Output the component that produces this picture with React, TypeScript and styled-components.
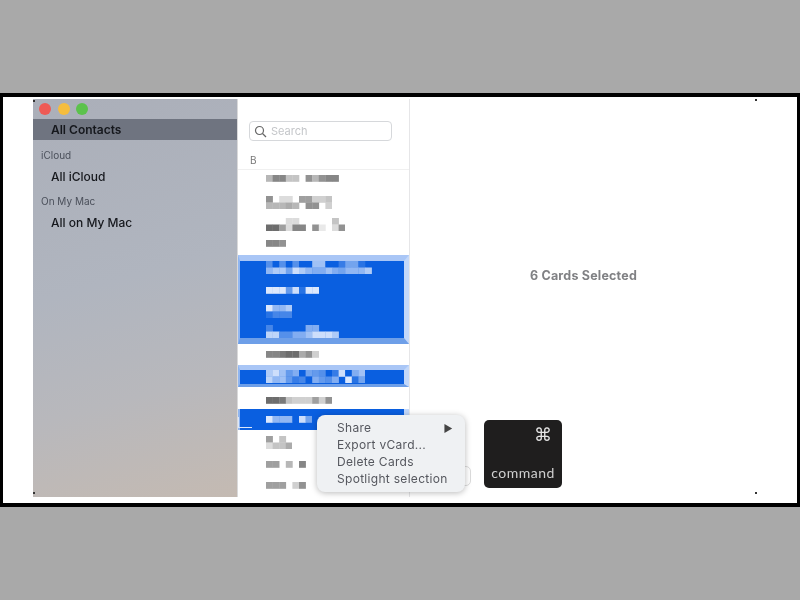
import React from 'react';
import styled, { createGlobalStyle } from 'styled-components';

const GlobalStyle = createGlobalStyle`
  html, body {
    margin: 0;
    padding: 0;
    background: #a9a9a9;
  }
  body {
    font-family: Inter, "Liberation Sans", sans-serif;
  }
`;

const Page = styled.div`
  width: 800px;
  height: 600px;
  padding-top: 93px;
  box-sizing: border-box;
  overflow: hidden;
`;

const Frame = styled.div`
  position: relative;
  height: 414px;
  box-sizing: border-box;
  border: solid #000;
  border-width: 4px 3px;
  background: #fff;
  padding: 2px 40px 6px 30px;
  filter: blur(0.4px);
`;

const Window = styled.div`
  display: flex;
  height: 398px;
`;

const Sidebar = styled.aside`
  width: 204px;
  flex: none;
  background: linear-gradient(165deg, #abafb9 0%, #b0b5bf 45%, #b8b8bc 72%, #c4bab2 100%);
  border-right: 1px solid #d9d9da;
`;

const TitleBar = styled.div`
  display: flex;
  align-items: center;
  gap: 6.5px;
  height: 20px;
  padding-left: 6px;
`;

const Light = styled.span<{ $color: string }>`
  width: 12px;
  height: 12px;
  border-radius: 50%;
  background: ${(p) => p.$color};
`;

const ActiveItem = styled.div`
  height: 21px;
  line-height: 21px;
  padding-left: 18px;
  background: #6f7480;
  color: #15171c;
  font-size: 12px;
  font-weight: 600;
`;

const GroupLabel = styled.div`
  margin: 6.5px 0 3px;
  height: 16px;
  line-height: 16px;
  padding-left: 8px;
  color: #4a4f5a;
  font-size: 10px;
`;

const SideItem = styled.div`
  height: 21px;
  line-height: 21px;
  padding-left: 18px;
  color: #15171c;
  font-size: 12px;
  font-weight: 500;
`;

const ListPane = styled.section`
  width: 171px;
  flex: none;
  overflow: hidden;
  border-right: 1px solid #e6e6e8;
  background: #fff;
`;

const SearchRow = styled.div`
  padding: 22px 17px 0 11px;
`;

const SearchBox = styled.div`
  display: flex;
  align-items: center;
  gap: 4px;
  height: 20px;
  box-sizing: border-box;
  padding-left: 4px;
  border: 1px solid #d6d8db;
  border-radius: 4px;
  color: #c4c6c9;
  font-size: 11px;
`;

const SectionHead = styled.div`
  margin-top: 13px;
  height: 15px;
  line-height: 13px;
  padding-left: 12px;
  border-bottom: 1px solid #f0f0f0;
  color: #777;
  font-size: 10px;
`;

const Row = styled.div<{ $h?: number; $top?: number }>`
  height: ${(p) => p.$h ?? 22}px;
  box-sizing: border-box;
  padding: ${(p) => p.$top ?? 6}px 0 0 28px;
`;

const SelectionBlock = styled.div<{ $h: number; $top: number; $bottom: number }>`
  height: ${(p) => p.$h}px;
  box-sizing: border-box;
  padding-left: 26px;
  background: #0a5fe0;
  border-style: solid;
  border-color: #a9c6f6 #c3d8fa #6e9fe8 #8fb5f0;
  border-width: ${(p) => p.$top}px 5px ${(p) => p.$bottom}px 2px;
  overflow: hidden;
`;

const BlockLine = styled.div<{ $h: number }>`
  height: ${(p) => p.$h}px;
`;

const Detail = styled.main`
  flex: 1;
  display: flex;
  align-items: center;
  justify-content: center;
  padding-bottom: 46px;
  color: #808184;
  font-size: 12.5px;
  font-weight: 700;
  letter-spacing: 0.2px;
`;

const ContextMenu = styled.div`
  position: absolute;
  left: 314px;
  top: 318px;
  width: 148px;
  height: 77px;
  box-sizing: border-box;
  padding: 4px 12px 0 20px;
  border-radius: 8px;
  background: #eff1f3;
  box-shadow: 0 1px 6px rgba(0, 0, 0, 0.28);
  color: #55575e;
  font-size: 12px;
  letter-spacing: 0.3px;
`;

const MenuItem = styled.div`
  display: flex;
  justify-content: space-between;
  align-items: center;
  height: 17px;
  white-space: nowrap;
`;

const MenuArrow = styled.span`
  font-size: 10px;
  color: #444;
`;

const BehindOutline = styled.div`
  position: absolute;
  left: 450px;
  top: 369px;
  width: 18px;
  height: 20px;
  box-sizing: border-box;
  border: 1px solid #dcdcdc;
  border-radius: 5px;
`;

const RowBracket = styled.span`
  position: absolute;
  left: 235px;
  top: 320px;
  width: 14px;
  height: 11px;
  box-sizing: border-box;
  border-left: 1px solid #dbe7fb;
  border-bottom: 1px solid #dbe7fb;
`;

const CommandKey = styled.div`
  position: absolute;
  left: 481px;
  top: 323px;
  width: 78px;
  height: 68px;
  box-sizing: border-box;
  display: flex;
  flex-direction: column;
  justify-content: space-between;
  padding: 4px 0 7px;
  border-radius: 5px;
  background: #1f1e1e;
  color: #cfcfcf;
`;

const CommandGlyph = styled.span`
  align-self: flex-end;
  margin-right: 10px;
  font-family: "DejaVu Sans", sans-serif;
  font-size: 18px;
  line-height: 22px;
  color: #e6e6e6;
`;

const CommandLabel = styled.span`
  text-align: center;
  font-family: Lato, sans-serif;
  font-size: 14px;
  letter-spacing: 0.5px;
`;

const CornerTick = styled.span<{ $x: number; $y: number }>`
  position: absolute;
  left: ${(p) => p.$x}px;
  top: ${(p) => p.$y}px;
  width: 2px;
  height: 2px;
  background: #333;
`;

const CELL_W = 6.6;
const CELL_H = 6.5;

// one hex digit per pixel block, 0 = darkest and f = palest, "." is left out
const shade = (c: string, tone: 'gray' | 'blue') => {
  const t = parseInt(c, 16) / 15;
  const mix = (from: number, to: number) => Math.round(from + (to - from) * t);
  return tone === 'gray'
    ? `rgb(${mix(60, 245)},${mix(60, 245)},${mix(60, 245)})`
    : `rgb(${mix(10, 235)},${mix(95, 242)},${mix(224, 255)})`;
};

const Mosaic = ({ rows, tone = 'gray' }: { rows: string[]; tone?: 'gray' | 'blue' }) => {
  const cols = Math.max(...rows.map((r) => r.length));
  return (
    <svg width={cols * CELL_W} height={rows.length * CELL_H} style={{ display: 'block' }}>
      {rows.map((row, y) =>
        row.split('').map((c, x) =>
          c === '.' ? null : (
            <rect
              key={`${x}-${y}`}
              x={x * CELL_W}
              y={y * CELL_H}
              width={CELL_W + 0.3}
              height={CELL_H + 0.3}
              fill={shade(c, tone)}
            />
          ),
        ),
      )}
    </svg>
  );
};

const App = () => {
  return (
    <Page>
      <GlobalStyle />
      <Frame>
        <Window>
          <Sidebar>
            <TitleBar>
              <Light $color="#ee5a55" />
              <Light $color="#f5bd3e" />
              <Light $color="#5cc24c" />
            </TitleBar>
            <ActiveItem>All Contacts</ActiveItem>
            <GroupLabel>iCloud</GroupLabel>
            <SideItem>All iCloud</SideItem>
            <GroupLabel>On My Mac</GroupLabel>
            <SideItem>All on My Mac</SideItem>
          </Sidebar>

          <ListPane>
            <SearchRow>
              <SearchBox>
                <svg width="13" height="13" viewBox="0 0 13 13" fill="none" stroke="#666" strokeWidth="1.2">
                  <circle cx="5.5" cy="5.5" r="4" />
                  <path d="M8.5 8.5l3.5 3.5" />
                </svg>
                Search
              </SearchBox>
            </SearchRow>
            <SectionHead>B</SectionHead>

            <Row $h={21} $top={5}>
              <Mosaic rows={['a66bb.7a766']} />
            </Row>
            <Row $h={24} $top={5}>
              <Mosaic rows={['7.dd.88ccb', 'aaa9a.77.c']} />
            </Row>
            <Row $h={23} $top={3}>
              <Mosaic rows={['...dd.....b', '448d66.7e.d7']} />
            </Row>
            <Row $h={17} $top={2}>
              <Mosaic rows={['667']} />
            </Row>

            <SelectionBlock $h={89} $top={6} $bottom={6}>
              <BlockLine $h={26}>
                <Mosaic tone="blue" rows={['505050.aa003772', '9bb7db988a87999b']} />
              </BlockLine>
              <BlockLine $h={18}>
                <Mosaic tone="blue" rows={['eee6d2ee']} />
              </BlockLine>
              <BlockLine $h={20}>
                <Mosaic tone="blue" rows={['e99b', '2444']} />
              </BlockLine>
              <BlockLine $h={13}>
                <Mosaic tone="blue" rows={['4.....88', 'cc5588adddb']} />
              </BlockLine>
            </SelectionBlock>

            <Row $h={21} $top={7}>
              <Mosaic rows={['6654497c']} />
            </Row>
            <SelectionBlock $h={22} $top={5} $bottom={3}>
              <BlockLine $h={14}>
                <Mosaic tone="blue" rows={['bda680765.3d08a', 'c9a63408658.e27']} />
              </BlockLine>
            </SelectionBlock>
            <Row $h={22} $top={10}>
              <Mosaic rows={['445bccc8c7']} />
            </Row>
            <SelectionBlock $h={21} $top={0} $bottom={0}>
              <BlockLine $h={7} />
              <BlockLine $h={14}>
                <Mosaic tone="blue" rows={['e9990d7']} />
              </BlockLine>
            </SelectionBlock>
            <Row $h={22} $top={6}>
              <Mosaic rows={['8.b', 'dbb9']} />
            </Row>
            <Row $h={22} $top={9}>
              <Mosaic rows={['88.a.6']} />
            </Row>
            <Row $h={22} $top={8}>
              <Mosaic rows={['888.c7']} />
            </Row>
          </ListPane>

          <Detail>6 Cards Selected</Detail>
        </Window>

        <CornerTick $x={30} $y={3} />
        <CornerTick $x={30} $y={395} />
        <CornerTick $x={752} $y={2} />
        <CornerTick $x={752} $y={395} />

        <RowBracket />
        <BehindOutline />
        <ContextMenu>
          <MenuItem>
            Share <MenuArrow>▶</MenuArrow>
          </MenuItem>
          <MenuItem>Export vCard...</MenuItem>
          <MenuItem>Delete Cards</MenuItem>
          <MenuItem>Spotlight selection</MenuItem>
        </ContextMenu>

        <CommandKey>
          <CommandGlyph>⌘</CommandGlyph>
          <CommandLabel>command</CommandLabel>
        </CommandKey>
      </Frame>
    </Page>
  );
};

export default App;
